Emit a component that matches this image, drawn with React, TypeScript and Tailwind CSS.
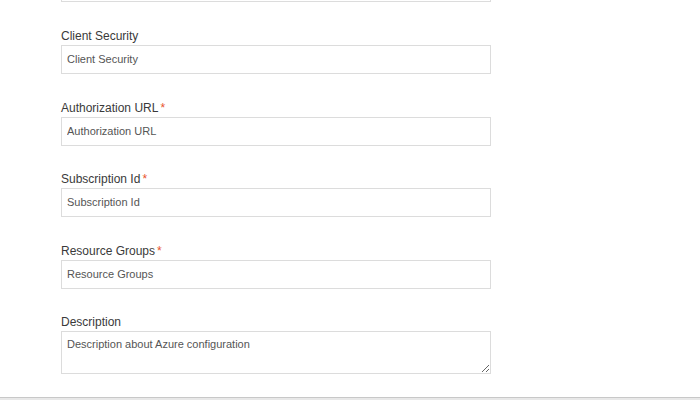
import React from "react";

const FIELDS = [
  { label: "Client Security", required: false, gap: "mt-[27px]" },
  { label: "Authorization URL", required: true, gap: "mt-[27px]" },
  { label: "Subscription Id", required: true, gap: "mt-[26px]" },
  { label: "Resource Groups", required: true, gap: "mt-[27px]" },
];

export default function App() {
  return (
    <div
      className="flex h-[400px] w-full flex-col overflow-hidden bg-white text-[#333]"
      style={{ fontFamily: '"Liberation Sans", Arial, sans-serif' }}
    >
      <div className="flex-1 pl-[61px]">
        <input
          className="-mt-[27px] block h-[29px] w-[430px] border border-[#dcdcdc] px-[5px] text-[11px] outline-none"
          placeholder="Client Id"
        />

        {FIELDS.map((f) => (
          <div key={f.label} className={f.gap}>
            <label className="block pb-[2px] text-[12px] leading-[14px] text-[#3a3a3a]">
              {f.label}
              {f.required && <span className="ml-[2px] text-[#e8542c]">*</span>}
            </label>
            <input
              className="block h-[29px] w-[430px] border border-[#dcdcdc] px-[5px] pb-[2px] text-[11px] text-[#555] outline-none placeholder:text-[#555]"
              placeholder={f.label}
            />
          </div>
        ))}

        <div className="mt-[26px]">
          <label className="block pb-[2px] text-[12px] leading-[14px] text-[#3a3a3a]">Description</label>
          <textarea
            className="block h-[43px] w-[430px] border border-[#dcdcdc] px-[5px] pt-[5px] text-[11px] leading-[14px] text-[#555] outline-none placeholder:text-[#555]"
            placeholder="Description about Azure configuration"
          />
        </div>
      </div>
      <div className="h-[3px] border-t border-[#c8c8c8] bg-[#e8e8e8]" />
    </div>
  );
}
